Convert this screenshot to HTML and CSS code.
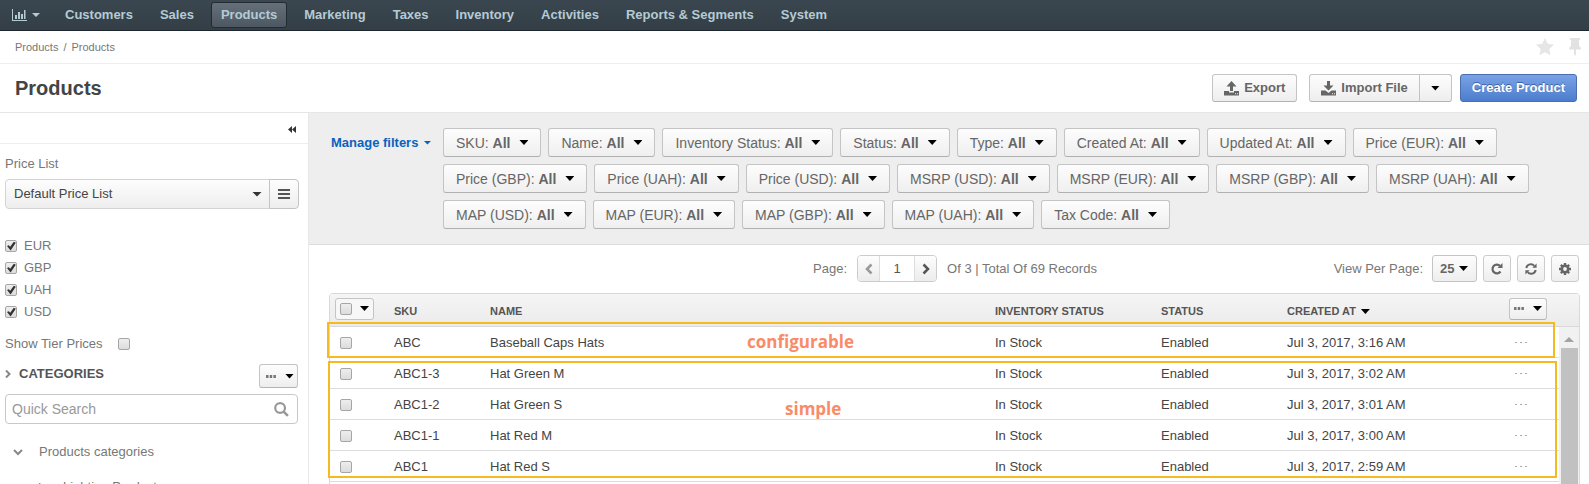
FILE: index.html
```html
<!DOCTYPE html>
<html lang="en">
<head>
<meta charset="utf-8">
<title>Products</title>
<link rel="stylesheet" href="styles.css">
</head>
<body>
<nav class="nav">
  <button class="nav-dash" aria-label="Dashboards">
    <svg width="15" height="12" viewBox="0 0 15 12" fill="currentColor"><path d="M0 0h1v11h14v1H0zM3 6h2v4H3zM6 3h2v7H6zM9 5h2v5H9zM12 1h1.500v9H12z"/></svg>
    <i class="caret small"></i>
  </button>
  <a class="nav-link" href="#">Customers</a>
  <a class="nav-link" href="#">Sales</a>
  <a class="nav-link active" href="#">Products</a>
  <a class="nav-link" href="#">Marketing</a>
  <a class="nav-link" href="#">Taxes</a>
  <a class="nav-link" href="#">Inventory</a>
  <a class="nav-link" href="#">Activities</a>
  <a class="nav-link" href="#">Reports &amp; Segments</a>
  <a class="nav-link" href="#">System</a>
</nav>

<div class="crumbs">
  <div class="crumb-path"><a href="#">Products</a><span>/</span><a href="#">Products</a></div>
  <div class="crumb-icons">
    <button class="plain" aria-label="Favourite"><svg width="18" height="18" viewBox="0 0 18 18" fill="#e6e6e6"><path d="M9 0l2.700 5.800 6.300.8-4.600 4.400 1.200 6.300L9 14.200 3.400 17.300l1.200-6.300L0 6.600l6.300-.8z"/></svg></button>
    <button class="plain" aria-label="Pin"><svg width="12" height="18" viewBox="0 0 12 18" fill="#e2e2e2"><path d="M1 0h10v2h-1v6c1.200.5 2 1.600 2 3.500H7V16l-1 2-1-2v-4.500H0C0 9.600.8 8.500 2 8V2H1z"/></svg></button>
  </div>
</div>

<header class="title-row">
  <h1>Products</h1>
  <div class="actions">
    <button class="btn"><svg width="15" height="15" viewBox="0 0 15 15" fill="currentColor"><path d="M7.500 0L12.500 5.500H9V10H6V5.500H2.500zM0 10h5v1.500h5V10h5v4.500H0zM11 12.300v1h1v-1zm2 0v1h1v-1z" fill-rule="evenodd"/></svg>Export</button>
    <div class="split">
      <button class="btn"><svg width="15" height="15" viewBox="0 0 15 15" fill="currentColor"><path d="M6 0h3v4.500h3.500L7.500 9.500l-5-5H6zM0 9.500h4.500l3 2.500 3-2.500H15v5H0zM11 12.300v1h1v-1zm2 0v1h1v-1z" fill-rule="evenodd"/></svg>Import File</button>
      <button class="btn split-end" aria-label="More import options"><i class="caret"></i></button>
    </div>
    <button class="btn primary">Create Product</button>
  </div>
</header>

<div class="body">
  <aside class="side">
    <div class="side-top"><button class="plain" aria-label="Collapse sidebar"><svg width="8" height="7" viewBox="0 0 8 7" fill="#333"><path d="M4 0v7L0 3.500zM8 0v7L4 3.500z"/></svg></button></div>
    <div class="side-body">
      <label class="price-label" for="pl">Price List</label>
      <div class="price-row">
        <span class="pick pick-wide"><select id="pl"><option>Default Price List</option></select><i class="caret wide"></i></span>
        <button class="menu-btn" aria-label="Choose price list"><svg width="12" height="10" viewBox="0 0 12 10" fill="#555"><path d="M0 0h12v2H0zM0 4h12v2H0zM0 8h12v2H0z"/></svg></button>
      </div>
      <div class="currencies">
        <label><input type="checkbox" checked>EUR</label>
        <label><input type="checkbox" checked>GBP</label>
        <label><input type="checkbox" checked>UAH</label>
        <label><input type="checkbox" checked>USD</label>
      </div>
      <label class="tier">Show Tier Prices<input type="checkbox"></label>
      <div class="cat-head">
        <svg width="6" height="8" viewBox="0 0 6 8" fill="none" stroke="#888" stroke-width="2"><path d="M1 0.500L4.500 4 1 7.500"/></svg>
        <h2>CATEGORIES</h2>
        <button class="btn dots-btn" aria-label="Category actions"><svg width="10" height="3" viewBox="0 0 10 3" fill="#777"><path d="M0 0h2.500v3H0zM3.700 0h2.500v3H3.700zM7.400 0h2.500v3H7.400z"/></svg><i class="caret"></i></button>
      </div>
      <div class="search">
        <input type="text" placeholder="Quick Search" aria-label="Quick Search">
        <svg width="15" height="15" viewBox="0 0 16 16" fill="none" stroke="#999"><circle cx="6.500" cy="6.500" r="5.200" stroke-width="2.400"/><path d="M10.300 10.300l4.500 4.500" stroke-width="2.800"/></svg>
      </div>
      <ul class="tree">
        <li><svg width="10" height="7" viewBox="0 0 10 7" fill="none" stroke="#888" stroke-width="2"><path d="M1 1l4 4 4-4"/></svg>Products categories</li>
        <li class="child"><svg width="6" height="8" viewBox="0 0 6 8" fill="none" stroke="#888" stroke-width="2"><path d="M1 0.500L4.500 4 1 7.500"/></svg>Lighting Products</li>
      </ul>
    </div>
  </aside>

  <main class="main">
    <section class="filters">
      <button class="manage">Manage filters<i class="caret small"></i></button>
      <div class="filter-list">
        <button class="filter">SKU: <b>All</b><i class="caret"></i></button>
        <button class="filter">Name: <b>All</b><i class="caret"></i></button>
        <button class="filter">Inventory Status: <b>All</b><i class="caret"></i></button>
        <button class="filter">Status: <b>All</b><i class="caret"></i></button>
        <button class="filter">Type: <b>All</b><i class="caret"></i></button>
        <button class="filter">Created At: <b>All</b><i class="caret"></i></button>
        <button class="filter">Updated At: <b>All</b><i class="caret"></i></button>
        <button class="filter">Price (EUR): <b>All</b><i class="caret"></i></button>
        <button class="filter">Price (GBP): <b>All</b><i class="caret"></i></button>
        <button class="filter">Price (UAH): <b>All</b><i class="caret"></i></button>
        <button class="filter">Price (USD): <b>All</b><i class="caret"></i></button>
        <button class="filter">MSRP (USD): <b>All</b><i class="caret"></i></button>
        <button class="filter">MSRP (EUR): <b>All</b><i class="caret"></i></button>
        <button class="filter">MSRP (GBP): <b>All</b><i class="caret"></i></button>
        <button class="filter">MSRP (UAH): <b>All</b><i class="caret"></i></button>
        <button class="filter">MAP (USD): <b>All</b><i class="caret"></i></button>
        <button class="filter">MAP (EUR): <b>All</b><i class="caret"></i></button>
        <button class="filter">MAP (GBP): <b>All</b><i class="caret"></i></button>
        <button class="filter">MAP (UAH): <b>All</b><i class="caret"></i></button>
        <button class="filter">Tax Code: <b>All</b><i class="caret"></i></button>
      </div>
    </section>

    <section class="toolbar">
      <div class="pager">
        <label for="page">Page:</label>
        <div class="pager-box">
          <button aria-label="Previous page" disabled><svg width="8" height="12" viewBox="0 0 8 12" fill="none" stroke="currentColor" stroke-width="2.500"><path d="M6.500 1.500L2 6l4.500 4.500"/></svg></button>
          <input id="page" type="text" value="1">
          <button aria-label="Next page"><svg width="8" height="12" viewBox="0 0 8 12" fill="none" stroke="currentColor" stroke-width="2.500"><path d="M1.500 1.500L6 6l-4.500 4.500"/></svg></button>
        </div>
        <span>Of 3 | Total Of 69 Records</span>
      </div>
      <div class="tools">
        <label for="per">View Per Page:</label>
        <span class="pick pick-num"><select id="per"><option>25</option></select><i class="caret"></i></span>
        <button class="btn tool" aria-label="Refresh"><svg width="12" height="12" viewBox="0 0 12 12"><path d="M9.500 8.500A4.400 4.400 0 1 1 9 2.800" fill="none" stroke="#666" stroke-width="2.200"/><path d="M11.500 0v5h-5z" fill="#666"/></svg></button>
        <button class="btn tool" aria-label="Reset"><svg width="12" height="12" viewBox="0 0 12 12"><path d="M1.300 5A4.600 4.600 0 0 1 9.300 2.800M10.700 7A4.600 4.600 0 0 1 2.700 9.200" fill="none" stroke="#666" stroke-width="2"/><path d="M11.600.5v4.300H7.300zM.4 11.500V7.200h4.300z" fill="#666"/></svg></button>
        <button class="btn tool" aria-label="Grid settings"><svg width="12" height="12" viewBox="0 0 12 12"><circle cx="6" cy="6" r="3.200" fill="none" stroke="#666" stroke-width="2.600"/><path d="M6 0v2.500M6 9.500V12M0 6h2.500M9.500 6H12M1.800 1.800l1.700 1.700M8.500 8.500l1.700 1.700M10.200 1.800L8.500 3.500M3.500 8.500l-1.700 1.700" stroke="#666" stroke-width="2.400"/></svg></button>
      </div>
    </section>

    <section class="panel">
      <table class="grid">
        <colgroup><col class="c-check"><col class="c-sku"><col><col class="c-inv"><col class="c-status"><col class="c-date"><col class="c-act"></colgroup>
        <thead>
          <tr>
            <th><span class="check-btn"><input type="checkbox" aria-label="Select all"><i class="caret"></i></span></th>
            <th>SKU</th><th>NAME</th><th>INVENTORY STATUS</th><th>STATUS</th>
            <th>CREATED AT <i class="caret"></i></th>
            <th class="act"><button class="btn dots-btn" aria-label="Mass actions"><svg width="10" height="3" viewBox="0 0 10 3" fill="#777"><path d="M0 0h2.500v3H0zM3.700 0h2.500v3H3.700zM7.400 0h2.500v3H7.400z"/></svg><i class="caret"></i></button></th>
          </tr>
        </thead>
        <tbody>
          <tr><td><input type="checkbox" aria-label="Select ABC"></td><td>ABC</td><td>Baseball Caps Hats</td><td>In Stock</td><td>Enabled</td><td>Jul 3, 2017, 3:16 AM</td><td class="act"><button class="row-act" aria-label="Actions"><svg width="12" height="1" viewBox="0 0 12 1" fill="#aaa"><path d="M0 0h2v1H0zM5 0h2v1H5zM10 0h2v1h-2z"/></svg></button></td></tr>
          <tr><td><input type="checkbox" aria-label="Select ABC1-3"></td><td>ABC1-3</td><td>Hat Green M</td><td>In Stock</td><td>Enabled</td><td>Jul 3, 2017, 3:02 AM</td><td class="act"><button class="row-act" aria-label="Actions"><svg width="12" height="1" viewBox="0 0 12 1" fill="#aaa"><path d="M0 0h2v1H0zM5 0h2v1H5zM10 0h2v1h-2z"/></svg></button></td></tr>
          <tr><td><input type="checkbox" aria-label="Select ABC1-2"></td><td>ABC1-2</td><td>Hat Green S</td><td>In Stock</td><td>Enabled</td><td>Jul 3, 2017, 3:01 AM</td><td class="act"><button class="row-act" aria-label="Actions"><svg width="12" height="1" viewBox="0 0 12 1" fill="#aaa"><path d="M0 0h2v1H0zM5 0h2v1H5zM10 0h2v1h-2z"/></svg></button></td></tr>
          <tr><td><input type="checkbox" aria-label="Select ABC1-1"></td><td>ABC1-1</td><td>Hat Red M</td><td>In Stock</td><td>Enabled</td><td>Jul 3, 2017, 3:00 AM</td><td class="act"><button class="row-act" aria-label="Actions"><svg width="12" height="1" viewBox="0 0 12 1" fill="#aaa"><path d="M0 0h2v1H0zM5 0h2v1H5zM10 0h2v1h-2z"/></svg></button></td></tr>
          <tr><td><input type="checkbox" aria-label="Select ABC1"></td><td>ABC1</td><td>Hat Red S</td><td>In Stock</td><td>Enabled</td><td>Jul 3, 2017, 2:59 AM</td><td class="act"><button class="row-act" aria-label="Actions"><svg width="12" height="1" viewBox="0 0 12 1" fill="#aaa"><path d="M0 0h2v1H0zM5 0h2v1H5zM10 0h2v1h-2z"/></svg></button></td></tr>
        </tbody>
      </table>
      <div class="scroll-col">
        <div class="scroll-head"></div>
        <div class="scroll-track"><i class="scroll-arrow"></i><div class="scroll-thumb"></div></div>
      </div>
      <div class="mark mark-config"><span>configurable</span></div>
      <div class="mark mark-simple"><span>simple</span></div>
    </section>
  </main>
</div>
</body>
</html>
```
FILE: styles.css
```css
* { box-sizing: border-box; }
html, body { height: 100%; }
body {
  margin: 0;
  display: flex;
  flex-direction: column;
  overflow: hidden;
  background: #fff;
  color: #777;
  font: 13px/20px "Liberation Sans", Arial, sans-serif;
}
button, input, select { font: inherit; color: inherit; margin: 0; }
button { cursor: pointer; }
a { color: inherit; text-decoration: none; }
svg { display: block; flex: none; }
h1, h2 { margin: 0; }

.caret {
  display: inline-block;
  flex: none;
  width: 9px;
  height: 5px;
  background: #000;
  clip-path: polygon(0 0, 100% 0, 50% 100%);
}
.caret.small { width: 8px; height: 4px; background: currentColor; }
.caret.wide { width: 10px; background: #333; }

.plain { padding: 0; border: 0; background: none; }

.btn {
  display: flex;
  align-items: center;
  gap: 5px;
  height: 28px;
  padding: 0 11px;
  border: 1px solid #c4c4c4;
  border-bottom-color: #b3b3b3;
  border-radius: 3px;
  background: linear-gradient(#fdfdfd, #eee);
  color: #666;
  font-weight: bold;
}
.btn.primary {
  border-color: #4a6fae;
  background: linear-gradient(#7aa3e5, #4c7dcd);
  color: #fff;
  text-shadow: 0 -1px 0 #3a62a5;
}

/* Top navigation */
.nav {
  flex: none;
  display: flex;
  align-items: flex-start;
  gap: 7px;
  height: 31px;
  padding: 2px 12px;
  border-bottom: 1px solid #1d262d;
  background: linear-gradient(#3b4750, #333e46);
  color: #b5cbd4;
}
.nav-dash {
  display: flex;
  align-items: center;
  gap: 5px;
  width: 36px;
  height: 26px;
  padding: 0;
  border: 0;
  background: none;
}
.nav-link {
  height: 26px;
  padding: 0 9px;
  border: 1px solid transparent;
  border-radius: 3px;
  font-weight: bold;
  line-height: 23px;
}
.nav-link.active {
  border-color: #222b32;
  background: linear-gradient(#65707b, #4c5761);
}

/* Breadcrumbs and title */
.crumbs {
  flex: none;
  display: flex;
  align-items: center;
  justify-content: space-between;
  height: 33px;
  padding: 0 8px 0 15px;
  border-bottom: 1px solid #eee;
  font-size: 11px;
}
.crumb-path { display: flex; gap: 5px; }
.crumb-icons { display: flex; gap: 15px; }
.title-row {
  flex: none;
  display: flex;
  align-items: center;
  justify-content: space-between;
  height: 49px;
  padding: 0 12px 0 15px;
  border-bottom: 1px solid #e6e6e6;
}
.title-row h1 { color: #444; font-size: 20px; line-height: 24px; }
.actions { display: flex; gap: 12px; }
.actions .primary { margin-left: -4px; }
.split { display: flex; }
.split .btn:first-child { border-radius: 3px 0 0 3px; }
.split .split-end { margin-left: -1px; border-radius: 0 3px 3px 0; }

.body { flex: 1; display: flex; min-height: 0; }

/* Sidebar */
.side { flex: none; width: 309px; border-right: 1px solid #e8e8e8; }
.side-top {
  display: flex;
  align-items: center;
  justify-content: flex-end;
  height: 31px;
  padding: 2px 12px 0 0;
  border-bottom: 1px solid #eee;
}
.side-body { padding: 10px 9px 0 5px; }
.price-label { display: block; }
.price-row { display: flex; margin-top: 5px; }

.pick { display: inline-grid; align-items: center; }
.pick select, .pick .caret { grid-area: 1 / 1; }
.pick .caret { justify-self: end; pointer-events: none; }
.pick select {
  appearance: none;
  border: 1px solid #c4c4c4;
  border-radius: 3px;
  background: linear-gradient(#fdfdfd, #eee);
}
.pick-wide { flex: 1; }
.pick-wide select {
  height: 30px;
  padding: 0 8px;
  border-color: #d4d4d4;
  border-radius: 4px 0 0 4px;
  color: #444;
}
.pick-wide .caret { margin-right: 8px; }
.menu-btn {
  display: flex;
  align-items: center;
  justify-content: center;
  width: 30px;
  height: 30px;
  margin-left: -1px;
  padding: 0;
  border: 1px solid #c4c4c4;
  border-radius: 0 4px 4px 0;
  background: linear-gradient(#fdfdfd, #eee);
}

input[type="checkbox"] {
  appearance: none;
  display: block;
  flex: none;
  width: 12px;
  height: 12px;
  border: 1px solid #a6a6a6;
  border-radius: 2px;
  background: linear-gradient(#eee, #dcdcdc);
}
input[type="checkbox"]:checked::before {
  content: "";
  display: block;
  height: 10px;
  background: #333;
  clip-path: polygon(10% 50%, 28% 42%, 42% 58%, 78% 8%, 98% 18%, 46% 95%);
}
.currencies { margin-top: 26px; }
.currencies label { display: flex; align-items: center; gap: 7px; height: 22px; }
.tier { display: flex; align-items: center; gap: 15px; margin-top: 11px; }
.cat-head { display: flex; align-items: center; height: 24px; margin-top: 10px; padding-right: 1px; }
.cat-head h2 { flex: 1; margin-left: 8px; color: #555; font-size: 13px; line-height: 20px; padding-bottom: 4px; }
.cat-head > svg { margin-bottom: 4px; }
.dots-btn { justify-content: space-between; width: 39px; height: 24px; padding: 0 3px 0 6px; }
.search { display: grid; align-items: center; margin: 6px 1px 0 0; }
.search input, .search svg { grid-area: 1 / 1; }
.search input {
  width: 100%;
  height: 30px;
  padding: 0 36px 0 6px;
  border: 1px solid #c8c8c8;
  border-radius: 4px;
  font-size: 14px;
}
.search input::placeholder { color: #999; opacity: 1; }
.search svg { justify-self: end; margin-right: 9px; }
.tree { margin: 18px 0 0; padding: 0 0 0 8px; list-style: none; }
.tree li { display: flex; align-items: center; gap: 16px; height: 20px; }
.tree .child { margin-top: 15px; padding-left: 25px; gap: 19px; }

/* Filters */
.main { flex: 1; display: flex; flex-direction: column; min-width: 0; }
.filters {
  display: flex;
  align-items: flex-start;
  padding: 15px 50px 15px 22px;
  border-bottom: 1px solid #ddd;
  background: #eee;
}
.manage {
  display: flex;
  flex: none;
  align-items: center;
  gap: 5px;
  width: 112px;
  height: 29px;
  padding: 0;
  border: 0;
  background: none;
  color: #0a62bd;
  font-weight: bold;
}
.filter-list { display: flex; flex-wrap: wrap; gap: 7px; }
.filter {
  display: flex;
  align-items: center;
  height: 29px;
  padding: 0 12px;
  border: 1px solid #c4c4c4;
  border-bottom-color: #b0b0b0;
  border-radius: 3px;
  background: linear-gradient(#fdfdfd, #efefef);
  color: #666;
  font-size: 14px;
  white-space: pre;
}
.filter .caret { margin-left: 9px; }

/* Paging */
.toolbar {
  display: grid;
  grid-template-columns: 1fr auto 1fr;
  align-items: center;
  padding: 10px 10px 11px 22px;
}
.pager { grid-column: 2; display: flex; align-items: center; gap: 10px; }
.pager-box {
  display: flex;
  height: 27px;
  border: 1px solid #ccc;
  border-radius: 4px;
  overflow: hidden;
}
.pager-box button {
  display: flex;
  align-items: center;
  justify-content: center;
  width: 21px;
  padding: 0;
  border: 0;
  background: linear-gradient(#fdfdfd, #ececec);
  color: #555;
}
.pager-box button:disabled { color: #999; }
.pager-box input {
  width: 36px;
  padding: 0;
  border: solid #ddd;
  border-width: 0 1px;
  color: #555;
  text-align: center;
}
.tools { display: flex; align-items: center; justify-content: flex-end; gap: 6px; }
.tools label { margin-right: 3px; }
.pick-num select { width: 45px; height: 27px; padding: 0 7px; color: #666; font-weight: bold; }
.pick-num .caret { margin-right: 9px; }
.tool { justify-content: center; width: 28px; height: 27px; padding: 0; border-color: #ccc; }

/* Grid */
.panel {
  position: relative;
  flex: 1;
  display: grid;
  grid-template-columns: 1fr 20px;
  align-items: start;
  margin: 0 9px 0 20px;
  border: solid #d9d9d9;
  border-width: 1px 1px 0;
  border-radius: 4px 4px 0 0;
}
.grid { width: 100%; table-layout: fixed; border-collapse: separate; border-spacing: 0; }
.c-check { width: 54px; }
.c-sku { width: 96px; }
.c-inv { width: 166px; }
.c-status { width: 126px; }
.c-date { width: 200px; }
.c-act { width: 82px; }
.grid th, .scroll-head { height: 33px; border-bottom: 1px solid #d9d9d9; background: linear-gradient(#f5f5f5, #ebebeb); }
.grid th { padding: 2px 10px 0; color: #555; font-size: 11px; text-align: left; }
.grid th .caret { margin: 0 0 1px 2px; }
.grid td { height: 31px; padding: 1px 10px 0; border-bottom: 1px solid #ddd; color: #444; }
.grid th:first-child { padding: 0 5px 3px; }
.check-btn {
  display: flex;
  align-items: center;
  justify-content: space-between;
  width: 39px;
  height: 22px;
  padding: 0 4px;
  border: 1px solid #c4c4c4;
  border-radius: 3px;
  background: #f7f7f7;
}
.grid .check-btn .caret, .grid th .dots-btn .caret { margin: 0; }
.grid th.act { padding: 0 12px 3px 0; }
.grid .act > button { margin-left: auto; }
.grid .act .dots-btn { width: 38px; height: 22px; padding: 0 4px; }
.grid td.act { padding: 0 12px 0 0; }
.row-act {
  display: flex;
  align-items: center;
  width: 38px;
  height: 20px;
  padding: 0 6px;
  border: 0;
  background: none;
}
.scroll-col { display: flex; flex-direction: column; height: 100%; }
.scroll-track {
  flex: 1;
  display: flex;
  flex-direction: column;
  align-items: center;
  gap: 6px;
  padding-top: 10px;
  background: #f1f1f1;
}
.scroll-arrow { width: 10px; height: 5px; background: #a3a3a3; clip-path: polygon(50% 0, 100% 100%, 0 100%); }
.scroll-thumb { flex: 1; width: 17px; background: #c1c1c1; }

/* Highlight callouts lying over the grid rows */
.mark {
  position: absolute;
  border: 2px solid #f5b921;
  color: #f98b68;
  font: bold 17px/24px "Open Sans", "Noto Sans", sans-serif;
  pointer-events: none;
}
.mark-config { top: 28px; left: -3px; right: 24px; height: 36px; padding: 6px 0 0 418px; }
.mark-simple { top: 67px; left: -2px; right: 22px; height: 117px; padding: 34px 0 0 455px; }
```
